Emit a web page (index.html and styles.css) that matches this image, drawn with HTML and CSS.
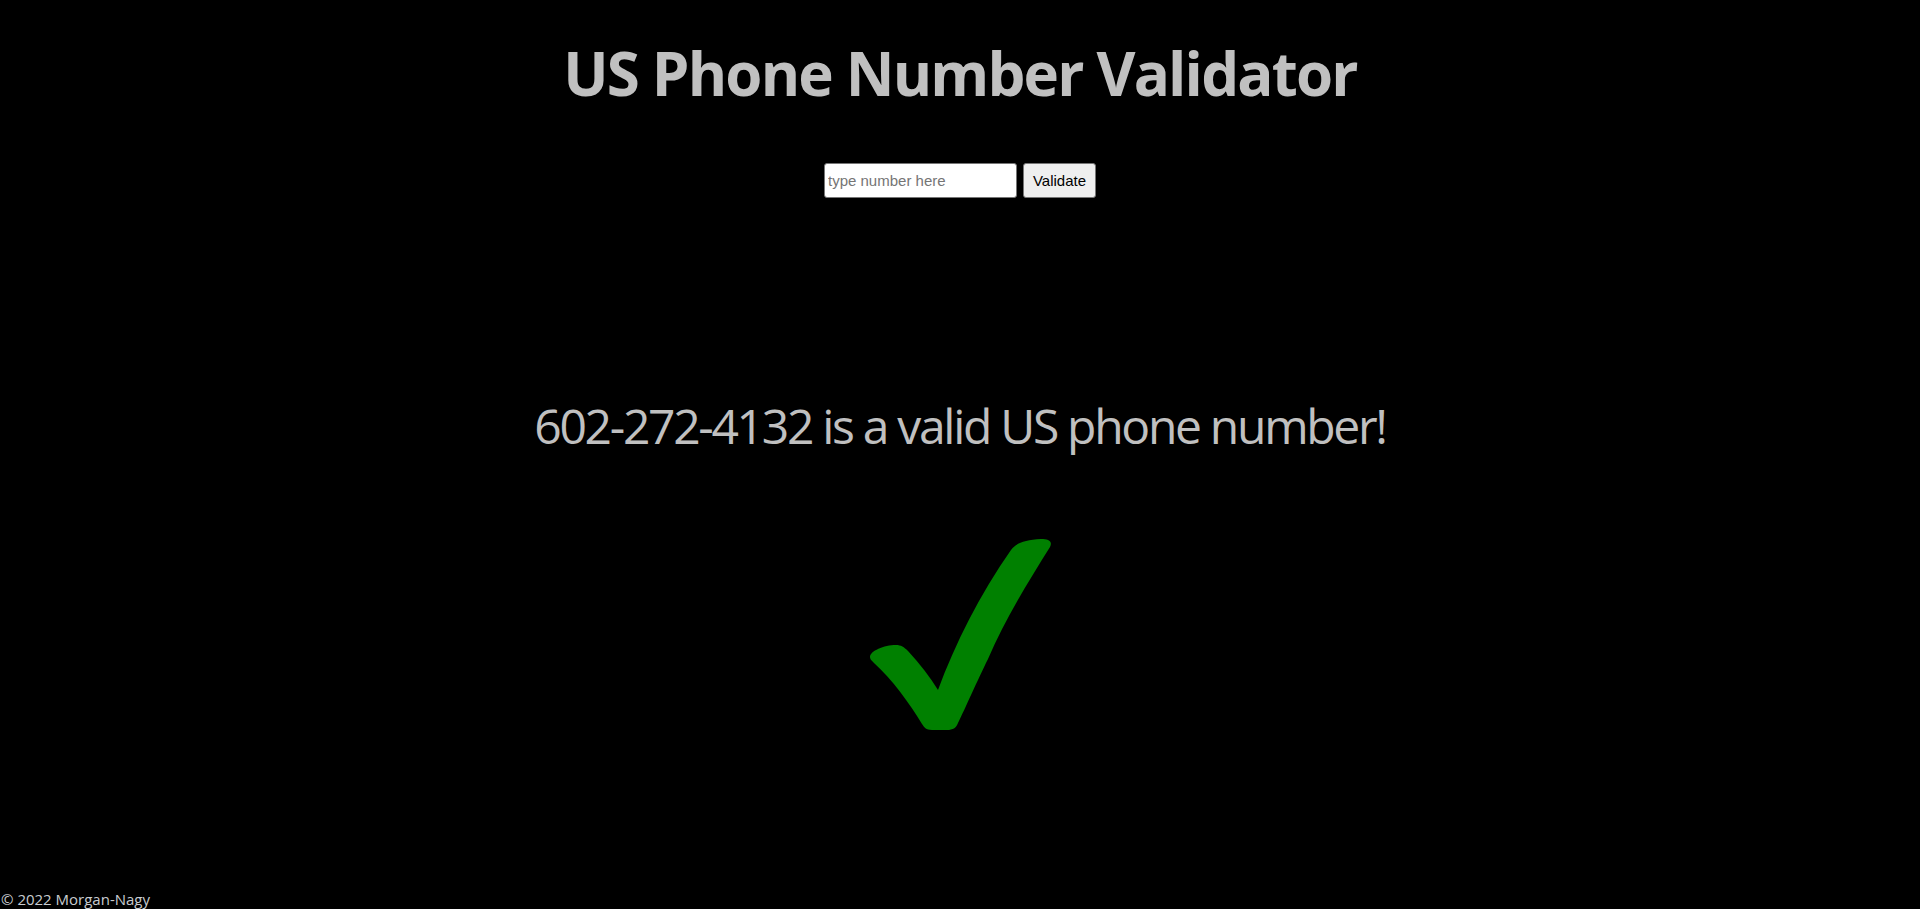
FILE: index.html
```html
<!DOCTYPE html>
<html lang="en">
<head>
<meta charset="utf-8">
<title>US Phone Number Validator</title>
<link rel="stylesheet" href="styles.css">
</head>
<body>
<main class="page">
  <h1 class="title">US Phone Number Validator</h1>
  <form class="form">
    <input class="field" type="text" placeholder="type number here">
    <button class="btn" type="button">Validate</button>
  </form>
  <p class="result">602-272-4132 is a valid US phone number!</p>
  <div class="mark">
    <svg width="182" height="193" viewBox="0 0 182 193" aria-hidden="true">
      <path fill="#008000" d="M 0,118 C 0,112 14,106 26,106 C 31,106 34,108 38,112 C 50,125 60,138 68,151 C 85,105 110,55 141,11 C 146,4 155,1 171,0 C 178,0 183,2 180,8 C 160,40 135,80 118,120 C 108,140 95,170 88,184 C 86,189 83,191 77,191 L 62,191 C 56,191 54,188 52,185 C 40,165 22,140 4,124 C 1,121 0,120 0,118 Z"/>
    </svg>
  </div>
</main>
<footer class="footer">© 2022 Morgan-Nagy</footer>
</body>
</html>
```

FILE: styles.css
```css
html, body {
  margin: 0;
  padding: 0;
  background: #000;
}
body {
  font-family: "Open Sans", "Noto Sans", sans-serif;
  color: #c0c0c0;
}
.page {
  display: flex;
  flex-direction: column;
  align-items: center;
  padding-top: 37px;
}
.title {
  margin: 0;
  font-size: 60px;
  line-height: 72px;
  font-weight: 700;
  letter-spacing: -1.8px;
  color: #c0c0c0;
}
.form {
  display: flex;
  gap: 6px;
  margin-top: 54px;
}
.field {
  box-sizing: border-box;
  width: 193px;
  height: 35px;
  padding: 0 3px;
  border: 1px solid #767676;
  border-radius: 3px;
  background: #fff;
  font-family: "Liberation Sans", Arial, sans-serif;
  font-size: 15px;
  color: #000;
}
.field::placeholder {
  color: #757575;
}
.btn {
  box-sizing: border-box;
  width: 73px;
  height: 35px;
  padding: 0;
  border: 1px solid #767676;
  border-radius: 3px;
  background: #efefef;
  font-family: "Liberation Sans", Arial, sans-serif;
  font-size: 15px;
  color: #000;
}
.result {
  margin: 196px 0 0;
  font-size: 48px;
  line-height: 64px;
  font-weight: 400;
  letter-spacing: -2.3px;
  color: #c0c0c0;
}
.mark {
  margin-top: 81px;
  display: flex;
  margin-left: 1px;
}
.footer {
  margin-top: 157px;
  padding-left: 1px;
  font-size: 15px;
  line-height: 21px;
  color: #c8ccd0;
}
```
